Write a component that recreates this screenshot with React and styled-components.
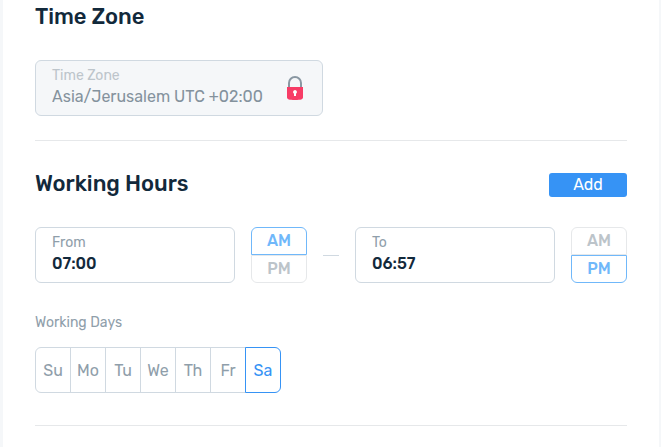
import React, { useState } from "react"
import styled, { createGlobalStyle } from "styled-components"

const DAYS = [
  { short: "Su", name: "Sunday" },
  { short: "Mo", name: "Monday" },
  { short: "Tu", name: "Tuesday" },
  { short: "We", name: "Wednesday" },
  { short: "Th", name: "Thursday" },
  { short: "Fr", name: "Friday" },
  { short: "Sa", name: "Saturday" },
]

const LockIcon = () => (
  <Lock viewBox="0 0 16 24" aria-hidden="true">
    <path
      d="M2 12V7a6 6 0 0 1 12 0v5"
      fill="none"
      stroke="#8997a2"
      strokeWidth="2"
    />
    <path d="M0 11h16v10.500c0 1.700-2 2.500-8 2.500s-8-.8-8-2.500z" fill="#f73c66" />
    <path d="M8 14a2 2 0 0 0-1 3.700V20h2v-2.300A2 2 0 0 0 8 14z" fill="#fff" />
  </Lock>
)

const Meridiem = ({ label, value, onChange }) => (
  <MeridiemGroup role="group" aria-label={label}>
    {["AM", "PM"].map(option => (
      <MeridiemButton
        key={option}
        type="button"
        $active={option === value}
        aria-pressed={option === value}
        onClick={() => onChange(option)}
      >
        {option}
      </MeridiemButton>
    ))}
  </MeridiemGroup>
)

const App = () => {
  const [from, setFrom] = useState("07:00")
  const [to, setTo] = useState("06:57")
  const [fromHalf, setFromHalf] = useState("AM")
  const [toHalf, setToHalf] = useState("PM")
  const [days, setDays] = useState(["Sa"])

  const toggleDay = day =>
    setDays(days.includes(day) ? days.filter(d => d !== day) : [...days, day])

  return (
    <>
      <GlobalStyle />
      <Panel>
        <TimeZoneSection>
          <Header>
            <Title>Time Zone</Title>
          </Header>
          <LockedField>
            <FieldText>
              <FieldLabel htmlFor="zone">Time Zone</FieldLabel>
              <FieldInput
                id="zone"
                disabled
                defaultValue="Asia/Jerusalem UTC +02:00"
              />
            </FieldText>
            <LockIcon />
          </LockedField>
        </TimeZoneSection>

        <HoursSection>
          <Header>
            <Title>Working Hours</Title>
            <AddButton type="button">Add</AddButton>
          </Header>
          <HoursRow>
            <Field>
              <FieldText>
                <FieldLabel htmlFor="from">From</FieldLabel>
                <TimeInput
                  id="from"
                  value={from}
                  onChange={e => setFrom(e.target.value)}
                />
              </FieldText>
            </Field>
            <Meridiem
              label="From AM or PM"
              value={fromHalf}
              onChange={setFromHalf}
            />
            <Dash />
            <Field>
              <FieldText>
                <FieldLabel htmlFor="to">To</FieldLabel>
                <TimeInput
                  id="to"
                  value={to}
                  onChange={e => setTo(e.target.value)}
                />
              </FieldText>
            </Field>
            <Meridiem label="To AM or PM" value={toHalf} onChange={setToHalf} />
          </HoursRow>
          <DaysLabel id="days-label">Working Days</DaysLabel>
          <DaysRow role="group" aria-labelledby="days-label">
            {DAYS.map(day => (
              <DayButton
                key={day.short}
                type="button"
                title={day.name}
                $active={days.includes(day.short)}
                aria-pressed={days.includes(day.short)}
                onClick={() => toggleDay(day.short)}
              >
                {day.short}
              </DayButton>
            ))}
          </DaysRow>
        </HoursSection>
      </Panel>
    </>
  )
}

export default App

const GlobalStyle = createGlobalStyle`
  * {
    box-sizing: border-box;
  }
  body {
    margin: 0;
    background: #f5f7f9;
    color: #12293b;
    font-family: Rubik, Roboto, sans-serif;
  }
  button,
  input {
    font-family: inherit;
  }
`

const Panel = styled.main`
  min-height: 100vh;
  margin: 0 2px 0 3px;
  padding: 0 32px;
  background: #fff;
`

const Section = styled.section`
  border-bottom: 1px solid #e6e8ea;
`

const TimeZoneSection = styled(Section)`
  padding-bottom: 24px;
`

const HoursSection = styled(Section)`
  padding: 26px 0 32px;
`

const Header = styled.header`
  display: flex;
  align-items: center;
  justify-content: space-between;
  margin-bottom: 26px;
`

const Title = styled.h2`
  margin: 0;
  font-size: 22px;
  font-weight: 500;
  line-height: 34px;
`

const AddButton = styled.button`
  width: 78px;
  height: 24px;
  margin-top: 2px;
  padding: 0;
  border: 0;
  border-radius: 3px;
  background: #3693f5;
  color: #fff;
  font-size: 16px;
  font-weight: 400;
  line-height: 24px;
  cursor: pointer;
`

const Field = styled.div`
  display: flex;
  flex: 1;
  align-items: center;
  min-width: 0;
  height: 56px;
  padding: 0 16px;
  border: 1px solid #d0d9e1;
  border-radius: 6px;
`

const LockedField = styled(Field)`
  max-width: 288px;
  background: #f5f7f9;
`

const FieldText = styled.div`
  flex: 1;
  min-width: 0;
  padding-bottom: 4px;
`

const FieldLabel = styled.label`
  display: block;
  color: #8f9eaa;
  font-size: 14px;
  line-height: 20px;

  ${LockedField} & {
    color: #bdc5cb;
  }
`

const FieldInput = styled.input`
  display: block;
  width: 100%;
  height: 20px;
  padding: 0;
  border: 0;
  outline: 0;
  background: transparent;
  color: #12293b;
  font-size: 16px;

  &:disabled {
    color: #84929d;
  }
`

const TimeInput = styled(FieldInput)`
  font-weight: 500;
`

const Lock = styled.svg`
  flex: none;
  width: 16px;
  height: 24px;
  margin: 0 3px 0 8px;
`

const HoursRow = styled.div`
  display: flex;
  align-items: center;
  gap: 16px;
`

const MeridiemGroup = styled.div`
  display: flex;
  flex-direction: column;
  width: 56px;
`

const MeridiemButton = styled.button`
  height: 28px;
  padding: 0;
  border: 1px solid ${props => (props.$active ? "#70b8fa" : "#e6e8ea")};
  background: #fff;
  color: ${props => (props.$active ? "#70b8fa" : "#bcc4ca")};
  font-size: 16px;
  font-weight: 500;
  line-height: 24px;
  cursor: pointer;

  &:first-child {
    border-radius: 6px 6px 0 0;
  }
  &:last-child {
    border-radius: 0 0 6px 6px;
  }
`

const Dash = styled.span`
  width: 16px;
  height: 1px;
  background: #d0d9e1;
`

const DaysLabel = styled.div`
  margin: 32px 0 16px;
  color: #8f9eaa;
  font-size: 14px;
  line-height: 16px;
`

const DaysRow = styled.div`
  display: flex;
`

const DayButton = styled.button`
  position: relative;
  z-index: ${props => (props.$active ? 1 : 0)};
  width: 36px;
  height: 46px;
  padding: 0;
  border: 1px solid ${props => (props.$active ? "#3693f5" : "#d0d9e1")};
  background: #fff;
  color: ${props => (props.$active ? "#3693f5" : "#8f9eaa")};
  font-size: 16px;
  cursor: pointer;

  & + & {
    margin-left: -1px;
  }
  &:first-child {
    border-radius: 6px 0 0 6px;
  }
  &:last-child {
    border-radius: 0 6px 6px 0;
  }
`
